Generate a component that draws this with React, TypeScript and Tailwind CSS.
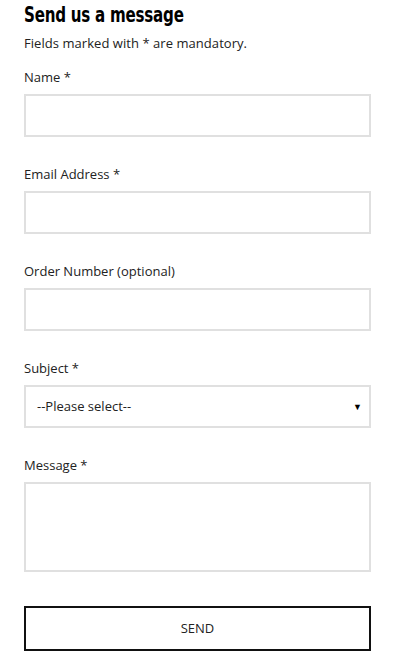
export default function App() {
  const font = { fontFamily: '"Open Sans", "Noto Sans", sans-serif' };
  return (
    <main className="min-h-screen bg-white pl-6 pr-7 text-[#222]" style={font}>
      <h1
        className="h-[27px] origin-left scale-x-[0.8] pt-[3px] text-[21px] leading-6 font-bold tracking-[-0.3px] text-black"
        style={{ fontFamily: '"DejaVu Sans Condensed", "Liberation Sans Narrow", sans-serif', fontStretch: "condensed" }}
      >
        Send us a message
      </h1>
      <p className="mt-[7px] text-[13px] leading-[18px] tracking-[0.05px]">Fields marked with * are mandatory.</p>

      <form className="mt-[15px] flex w-[347px] flex-col">
        <label className="pt-px text-[13px] leading-[18px]">Name *</label>
        <input className="mt-[8px] h-[43px] border-2 border-[#e0e0e0] outline-none" />

        <label className="mt-[27px] pt-px text-[13px] leading-[18px]">Email Address *</label>
        <input className="mt-[8px] h-[43px] border-2 border-[#e0e0e0] outline-none" />

        <label className="mt-[27px] pt-px text-[13px] leading-[18px]">Order Number (optional)</label>
        <input className="mt-[8px] h-[43px] border-2 border-[#e0e0e0] outline-none" />

        <label className="mt-[27px] pt-px text-[13px] leading-[18px]">Subject *</label>
        <div className="mt-[8px] flex h-[43px] items-center justify-between border-2 border-[#e0e0e0] pl-[11px] pr-[7px] text-[13px]">
          <span>--Please select--</span>
          <span className="text-[9px] text-black">▼</span>
        </div>

        <label className="mt-[27px] pt-px text-[13px] leading-[18px]">Message *</label>
        <textarea className="mt-[8px] h-[90px] resize-none border-2 border-[#e0e0e0] outline-none" />

        <button
          type="button"
          className="mt-[34px] h-[45px] border-2 border-[#111] bg-white text-[13px] font-normal text-[#222]"
        >
          SEND
        </button>
      </form>
    </main>
  );
}
